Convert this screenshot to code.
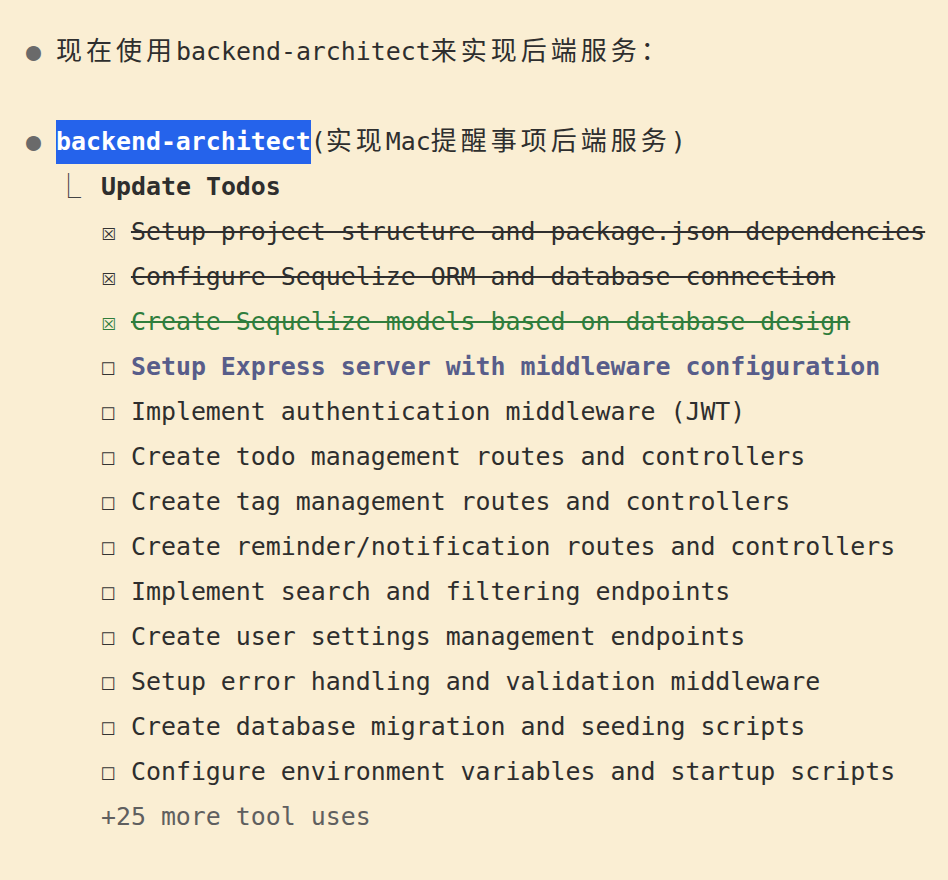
import React from "react";

const CJK = ({ children }: { children: React.ReactNode }) => (
  <span className="tracking-[4px] text-[26px] [font-family:'Noto_Sans_CJK_SC','Noto_Sans_CJK_JP',sans-serif]">
    {children}
  </span>
);

type Item = { text: string; state: "done" | "doneGreen" | "active" | "todo" };

const items: Item[] = [
  { text: "Setup project structure and package.json dependencies", state: "done" },
  { text: "Configure Sequelize ORM and database connection", state: "done" },
  { text: "Create Sequelize models based on database design", state: "doneGreen" },
  { text: "Setup Express server with middleware configuration", state: "active" },
  { text: "Implement authentication middleware (JWT)", state: "todo" },
  { text: "Create todo management routes and controllers", state: "todo" },
  { text: "Create tag management routes and controllers", state: "todo" },
  { text: "Create reminder/notification routes and controllers", state: "todo" },
  { text: "Implement search and filtering endpoints", state: "todo" },
  { text: "Create user settings management endpoints", state: "todo" },
  { text: "Setup error handling and validation middleware", state: "todo" },
  { text: "Create database migration and seeding scripts", state: "todo" },
  { text: "Configure environment variables and startup scripts", state: "todo" },
];

function Row({ children }: { children?: React.ReactNode }) {
  return <div className="h-[45px] leading-[45px] whitespace-pre">{children}</div>;
}

export default function App() {
  return (
    <div className="relative w-[948px] h-[880px] overflow-hidden bg-[#faeed3] text-[#2e2e2e] text-[24.9px] pl-[26px] pt-[26px] [font-family:'DejaVu_Sans_Mono',monospace]">
      <Row>
        <span className="text-[#6a6a6a]">● </span>
        <CJK>现在使用</CJK>
        <span>backend-architect</span>
        <CJK>来实现后端服务：</CJK>
      </Row>
      <Row />
      <Row>
        <span className="text-[#6a6a6a]">● </span>
        <span className="inline-block h-[44px] leading-[44px] bg-[#2563eb] text-white font-bold">backend-architect</span>
        <span>(</span>
        <CJK>实现</CJK>
        <span>Mac</span>
        <CJK>提醒事项后端服务</CJK>
        <span>)</span>
      </Row>
      <div className="h-[45px] leading-[45px] whitespace-pre mt-[3px]">
        <span className="inline-block w-[75px] text-[#444]">{"  ⎿"}</span>
        <span className="font-bold">Update Todos</span>
      </div>
      <div>
        {items.map((it, i) => {
          const color =
            it.state === "doneGreen"
              ? "text-[#2f7d3c]"
              : it.state === "active"
              ? "text-[#585d8a] font-bold"
              : "text-[#2e2e2e]";
          const box = it.state === "done" || it.state === "doneGreen" ? "☒" : "☐";
          return (
            <Row key={i}>
              <span>{"     "}</span>
              <span className={`${it.state === "doneGreen" ? "text-[#2f7d3c]" : "text-[#333]"} font-normal`}>{box}</span>
              <span>{" "}</span>
              <span
                className={`${color} ${
                  it.state === "done" || it.state === "doneGreen" ? "line-through decoration-2" : ""
                }`}
              >
                {it.text}
              </span>
            </Row>
          );
        })}
        <Row>
          <span>{"     "}</span>
          <span className="text-[#5f5f5f]">+25 more tool uses</span>
        </Row>
      </div>
    </div>
  );
}
